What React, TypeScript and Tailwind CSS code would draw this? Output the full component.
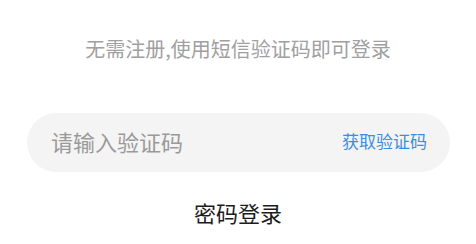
export default function App() {
  return (
    <div
      className="w-[476px] h-[244px] bg-white flex flex-col items-center"
      style={{ fontFamily: '"Noto Sans CJK SC", "Noto Sans", sans-serif' }}
    >
      <div className="mt-[36px] h-[26px] leading-[26px] text-[20px] text-[#a0a0a0]">
        无需注册,使用短信验证码即可登录
      </div>
      <div className="mt-[51px] w-[423px] h-[59px] ml-[1px] rounded-full bg-[#f4f4f4] flex items-center justify-between pl-[24px] pr-[23px] pb-[4px]">
        <span className="text-[22px] text-[#9a9a9a] leading-none">请输入验证码</span>
        <span className="text-[17px] text-[#3b8de3] leading-none">获取验证码</span>
      </div>
      <div className="mt-[29px] text-[22px] leading-none text-[#1c1c1c]">密码登录</div>
    </div>
  );
}
